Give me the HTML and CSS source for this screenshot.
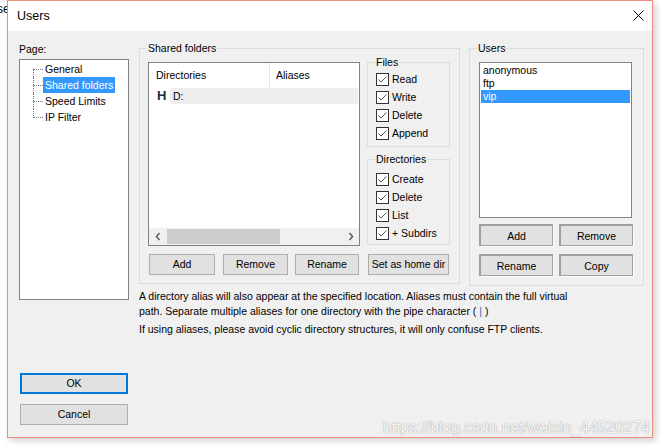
FILE: index.html
```html
<!DOCTYPE html>
<html>
<head>
<meta charset="utf-8">
<title>Users</title>
<link rel="stylesheet" href="styles.css">
</head>
<body>
<span class="behind">se</span>
<div class="window">
  <div class="titlebar">
    <span class="title">Users</span>
    <svg class="close" width="11" height="11" viewBox="0 0 11 11"><path d="M0.5 0.5 L10.5 10.5 M10.5 0.5 L0.5 10.5" stroke="#000" stroke-width="1" fill="none"/></svg>
  </div>
  <div class="client">
    <div class="left">
      <div class="page-label">Page:</div>
      <div class="tree">
        <div class="tree-row first"><span>General</span></div>
        <div class="tree-row"><span class="sel">Shared folders</span></div>
        <div class="tree-row"><span>Speed Limits</span></div>
        <div class="tree-row last"><span>IP Filter</span></div>
      </div>
      <button class="btn ok">OK</button>
      <button class="btn cancel">Cancel</button>
    </div>
    <div class="content">
      <div class="top-row">
        <div class="group shared">
          <span class="group-label">Shared folders</span>
          <div class="shared-grid">
            <div class="listview">
              <div class="lv-header">
                <div class="lv-col1">Directories</div>
                <div class="lv-col2">Aliases</div>
              </div>
              <div class="lv-row">
                <span class="h-icon">H</span>
                <span class="lv-text">D:</span>
              </div>
              <div class="lv-fill"></div>
              <div class="hscroll">
                <div class="arrow"><svg width="6" height="9" viewBox="0 0 6 9"><path d="M4.5 1 L1.5 4.5 L4.5 8" stroke="#606060" stroke-width="1.6" fill="none"/></svg></div>
                <div class="thumb"></div>
                <div class="track"></div>
                <div class="arrow"><svg width="6" height="9" viewBox="0 0 6 9"><path d="M1.5 1 L4.5 4.5 L1.5 8" stroke="#606060" stroke-width="1.6" fill="none"/></svg></div>
              </div>
            </div>
            <div class="checks">
              <div class="group files">
                <span class="group-label">Files</span>
                <div class="check-row"><span class="cb"><svg width="11" height="11" viewBox="0 0 11 11"><path d="M1.5 5.5 L4 8 L9.5 2.5" stroke="#555" stroke-width="1" fill="none"/></svg></span><span class="cb-label">Read</span></div>
                <div class="check-row"><span class="cb"><svg width="11" height="11" viewBox="0 0 11 11"><path d="M1.5 5.5 L4 8 L9.5 2.5" stroke="#555" stroke-width="1" fill="none"/></svg></span><span class="cb-label">Write</span></div>
                <div class="check-row"><span class="cb"><svg width="11" height="11" viewBox="0 0 11 11"><path d="M1.5 5.5 L4 8 L9.5 2.5" stroke="#555" stroke-width="1" fill="none"/></svg></span><span class="cb-label">Delete</span></div>
                <div class="check-row"><span class="cb"><svg width="11" height="11" viewBox="0 0 11 11"><path d="M1.5 5.5 L4 8 L9.5 2.5" stroke="#555" stroke-width="1" fill="none"/></svg></span><span class="cb-label">Append</span></div>
              </div>
              <div class="group dirs">
                <span class="group-label">Directories</span>
                <div class="check-row"><span class="cb"><svg width="11" height="11" viewBox="0 0 11 11"><path d="M1.5 5.5 L4 8 L9.5 2.5" stroke="#555" stroke-width="1" fill="none"/></svg></span><span class="cb-label">Create</span></div>
                <div class="check-row"><span class="cb"><svg width="11" height="11" viewBox="0 0 11 11"><path d="M1.5 5.5 L4 8 L9.5 2.5" stroke="#555" stroke-width="1" fill="none"/></svg></span><span class="cb-label">Delete</span></div>
                <div class="check-row"><span class="cb"><svg width="11" height="11" viewBox="0 0 11 11"><path d="M1.5 5.5 L4 8 L9.5 2.5" stroke="#555" stroke-width="1" fill="none"/></svg></span><span class="cb-label">List</span></div>
                <div class="check-row"><span class="cb"><svg width="11" height="11" viewBox="0 0 11 11"><path d="M1.5 5.5 L4 8 L9.5 2.5" stroke="#555" stroke-width="1" fill="none"/></svg></span><span class="cb-label">+ Subdirs</span></div>
              </div>
            </div>
            <div class="btn-row">
              <button class="btn b-add">Add</button>
              <button class="btn b-remove">Remove</button>
              <button class="btn b-rename">Rename</button>
            </div>
            <div class="home-wrap">
              <button class="btn b-home">Set as home dir</button>
            </div>
          </div>
        </div>
        <div class="group users">
          <span class="group-label">Users</span>
          <div class="listbox">
            <div class="lb-item">anonymous</div>
            <div class="lb-item">ftp</div>
            <div class="lb-item sel">vip</div>
          </div>
          <div class="user-btns">
            <button class="btn3d">Add</button>
            <button class="btn3d">Remove</button>
            <button class="btn3d">Rename</button>
            <button class="btn3d">Copy</button>
          </div>
        </div>
      </div>
      <div class="notes">
        <p>A directory alias will also appear at the specified location. Aliases must contain the full virtual<br>path. Separate multiple aliases for one directory with the pipe character ( <span class="pipe">|</span> )</p>
        <p class="second">If using aliases, please avoid cyclic directory structures, it will only confuse FTP clients.</p>
      </div>
    </div>
  </div>
</div>
<div class="watermark">https://blog.csdn.net/weixin_44520274</div>
</body>
</html>
```
FILE: styles.css
```css
* { box-sizing: border-box; margin: 0; padding: 0; }
html, body { width: 661px; height: 445px; overflow: hidden; background: #fff; }
body {
  position: relative;
  padding-left: 7px;
  font-family: "Liberation Sans", Arial, sans-serif;
  font-size: 10.5px;
  color: #000;
}
.behind {
  position: absolute;
  left: -3px;
  top: 2px;
  font-size: 12px;
  line-height: 14px;
  z-index: 0;
}
.window {
  position: relative;
  z-index: 1;
  width: 646px;
  height: 438px;
  border: 1px solid #ec8c7e;
  box-shadow: 3px 3px 7px rgba(0,0,0,0.18);
  background: #f0f0f0;
  display: flex;
  flex-direction: column;
}
.titlebar {
  height: 30px;
  background: #fff;
  display: flex;
  justify-content: space-between;
  align-items: center;
  padding: 0 8px 0 9px;
}
.title { font-size: 12.5px; }
.close { align-self: flex-start; margin-top: 9px; }
.client {
  flex: 1;
  display: flex;
  padding: 12px 8px 0 11px;
}
.left { width: 110px; display: flex; flex-direction: column; }
.page-label { line-height: 13px; height: 13px; margin-bottom: 3px; }
.tree {
  height: 241px;
  border: 1px solid #828282;
  background: #fff;
  padding-top: 1px;
}
.tree-row {
  position: relative;
  height: 16px;
  line-height: 16px;
  padding-left: 23px;
}
.tree-row span { display: inline-block; height: 16px; padding: 0 2px; }
.tree-row span.sel { background: #3399ff; color: #fff; }
.tree-row::before {
  content: "";
  position: absolute;
  left: 13px;
  top: 8px;
  width: 10px;
  border-top: 1px dotted #7a7a7a;
}
.tree-row::after {
  content: "";
  position: absolute;
  left: 13px;
  top: 0;
  height: 16px;
  border-left: 1px dotted #7a7a7a;
}
.tree-row.first::after { top: 8px; height: 8px; }
.tree-row.last::after { height: 9px; }

.btn {
  font-family: inherit;
  font-size: 10.5px;
  color: #000;
  background: #e1e1e1;
  border: 1px solid #adadad;
  height: 21px;
  line-height: 19px;
  text-align: center;
  padding: 0;
}
.ok { width: 108px; margin-left: 1px; margin-top: 73px; border: 2px solid #0078d7; line-height: 17px; }
.cancel { width: 108px; margin-left: 1px; margin-top: 10px; }

.content { margin-left: 10px; margin-top: 5px; display: flex; flex-direction: column; }
.top-row { display: flex; gap: 9px; align-items: flex-start; }
.group { position: relative; border: 1px solid #dcdcdc; }
.group-label {
  position: absolute;
  top: -7px;
  left: 7px;
  padding: 0 1px;
  background: #f0f0f0;
  line-height: 13px;
  white-space: nowrap;
}
.shared { width: 321px; height: 236px; padding: 13px 9px 8px 8px; }
.shared-grid {
  display: grid;
  grid-template-columns: 212px 83px;
  grid-template-rows: 184px 21px;
  column-gap: 7px;
  row-gap: 8px;
}
.listview {
  border: 1px solid #828282;
  background: #fff;
  display: flex;
  flex-direction: column;
}
.lv-header { height: 25px; display: flex; line-height: 25px; }
.lv-col1 { width: 121px; padding-left: 7px; border-right: 1px solid #e5e5e5; }
.lv-col2 { padding-left: 6px; }
.lv-row { height: 16px; display: flex; align-items: stretch; line-height: 16px; }
.h-icon {
  width: 21px;
  padding-left: 8px;
  font-weight: bold;
  font-size: 13px;
  color: #1c2b3d;
}
.lv-text { flex: 1; background: #eeeeee; padding-left: 3px; margin-right: 1px; }
.lv-fill { flex: 1; }
.hscroll { height: 17px; background: #f0f0f0; display: flex; align-items: center; }
.arrow { width: 17px; height: 17px; display: flex; align-items: center; justify-content: center; }
.hscroll .arrow:first-child { width: 18px; }
.thumb { width: 113px; height: 15px; background: #cdcdcd; }
.track { flex: 1; }

.checks { display: flex; flex-direction: column; gap: 12px; }
.files { padding: 8px 0 3px 8px; }
.dirs { padding: 11px 0 1px 8px; }
.check-row { height: 18px; display: flex; align-items: flex-start; }
.cb {
  width: 13px;
  height: 13px;
  margin-top: 2px;
  border: 1px solid #333;
  background: #fff;
  display: flex;
}
.cb-label { margin-left: 3px; line-height: 16px; white-space: nowrap; }

.btn-row { display: flex; padding-left: 1px; }
.b-add { width: 66px; }
.b-remove { width: 65px; margin-left: 8px; }
.b-rename { width: 64px; margin-left: 7px; }
.home-wrap { padding-left: 1px; }
.b-home { width: 81px; white-space: nowrap; }

.users { width: 175px; height: 238px; padding: 13px 0 9px 9px; }
.listbox {
  width: 153px;
  height: 156px;
  border: 1px solid #828282;
  background: #fff;
  padding: 1px;
}
.lb-item { height: 13px; line-height: 13px; padding-left: 2px; }
.lb-item.sel { background: #3399ff; color: #fff; }
.user-btns {
  margin-top: 6px;
  display: grid;
  grid-template-columns: 74px 74px;
  grid-auto-rows: 22px;
  column-gap: 6px;
  row-gap: 8px;
}
.btn3d {
  font-family: inherit;
  font-size: 10.5px;
  color: #000;
  background: #e1e1e1;
  border-style: solid;
  border-color: #a0a0a0;
  border-width: 2px 1px 1px 2px;
  box-shadow: 1px 1px 0 #ffffff;
  padding: 0;
  text-align: center;
}

.notes { margin-top: 3px; white-space: nowrap; }
.notes p { line-height: 15px; }
.notes p.second { margin-top: 3px; }
.pipe { color: #3a62a8; }

.watermark {
  position: absolute;
  right: 11px;
  top: 419px;
  z-index: 2;
  font-size: 15.7px;
  line-height: 18px;
  color: #f7f7f7;
  text-shadow: 0 0 1px rgba(0,0,0,0.35), 0 0 2px rgba(0,0,0,0.12);
  white-space: nowrap;
}
```
